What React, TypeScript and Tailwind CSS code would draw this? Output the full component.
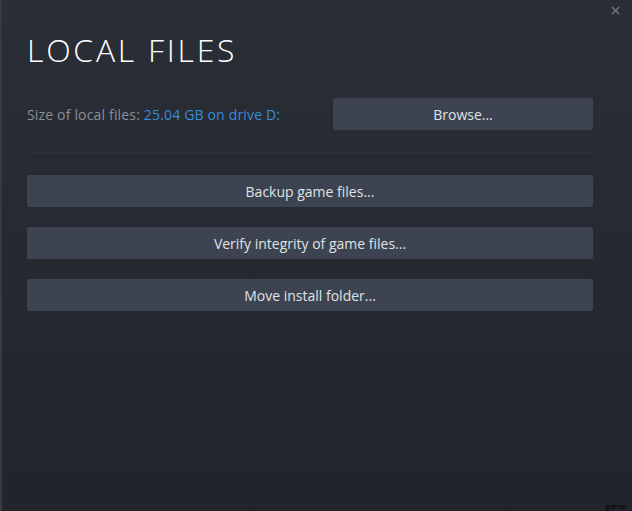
import { X } from "lucide-react";

const ACTIONS = [
  "Backup game files...",
  "Verify integrity of game files...",
  "Move install folder...",
];

function SteamButton({ label, className = "" }: { label: string; className?: string }) {
  return (
    <button
      className={`h-[32px] rounded-[2px] bg-[#3d4350] text-[14px] text-[#dfe3e6] ${className}`}
    >
      {label}
    </button>
  );
}

export default function App() {
  return (
    <div
      className="relative h-[511px] w-[632px] overflow-hidden border-l-2 border-[#353a44] bg-gradient-to-b from-[#2a2e37] to-[#21242b] font-['Open_Sans',sans-serif]"
    >
      {/* Close */}
      <button className="absolute right-[10px] top-[4px] text-[#6b717b]">
        <X className="h-[13px] w-[13px]" strokeWidth={3} />
      </button>

      <div className="flex flex-col pl-[25px] pr-[39px] pt-[30px]">
        <h1 className="text-[32px] font-light leading-[40px] tracking-[0.085em] text-white">
          LOCAL FILES
        </h1>

        {/* Size row */}
        <div className="mt-[28px] flex items-center justify-between">
          <p className="text-[14px] tracking-[0.012em] text-[#8a9099]">
            Size of local files:{" "}
            <span className="text-[#3b8bd9]">25.04 GB on drive D:</span>
          </p>
          <SteamButton label="Browse..." className="w-[260px]" />
        </div>

        <div className="mt-[22px] border-t border-[#2e323a]" />

        {/* Actions */}
        <div className="mt-[22px] flex flex-col gap-[20px]">
          {ACTIONS.map((action) => (
            <SteamButton key={action} label={action} className="w-full" />
          ))}
        </div>
      </div>

      {/* watermark */}
      <span className="absolute bottom-[1px] right-[6px] text-[8px] leading-none text-black">
        game
      </span>
    </div>
  );
}
